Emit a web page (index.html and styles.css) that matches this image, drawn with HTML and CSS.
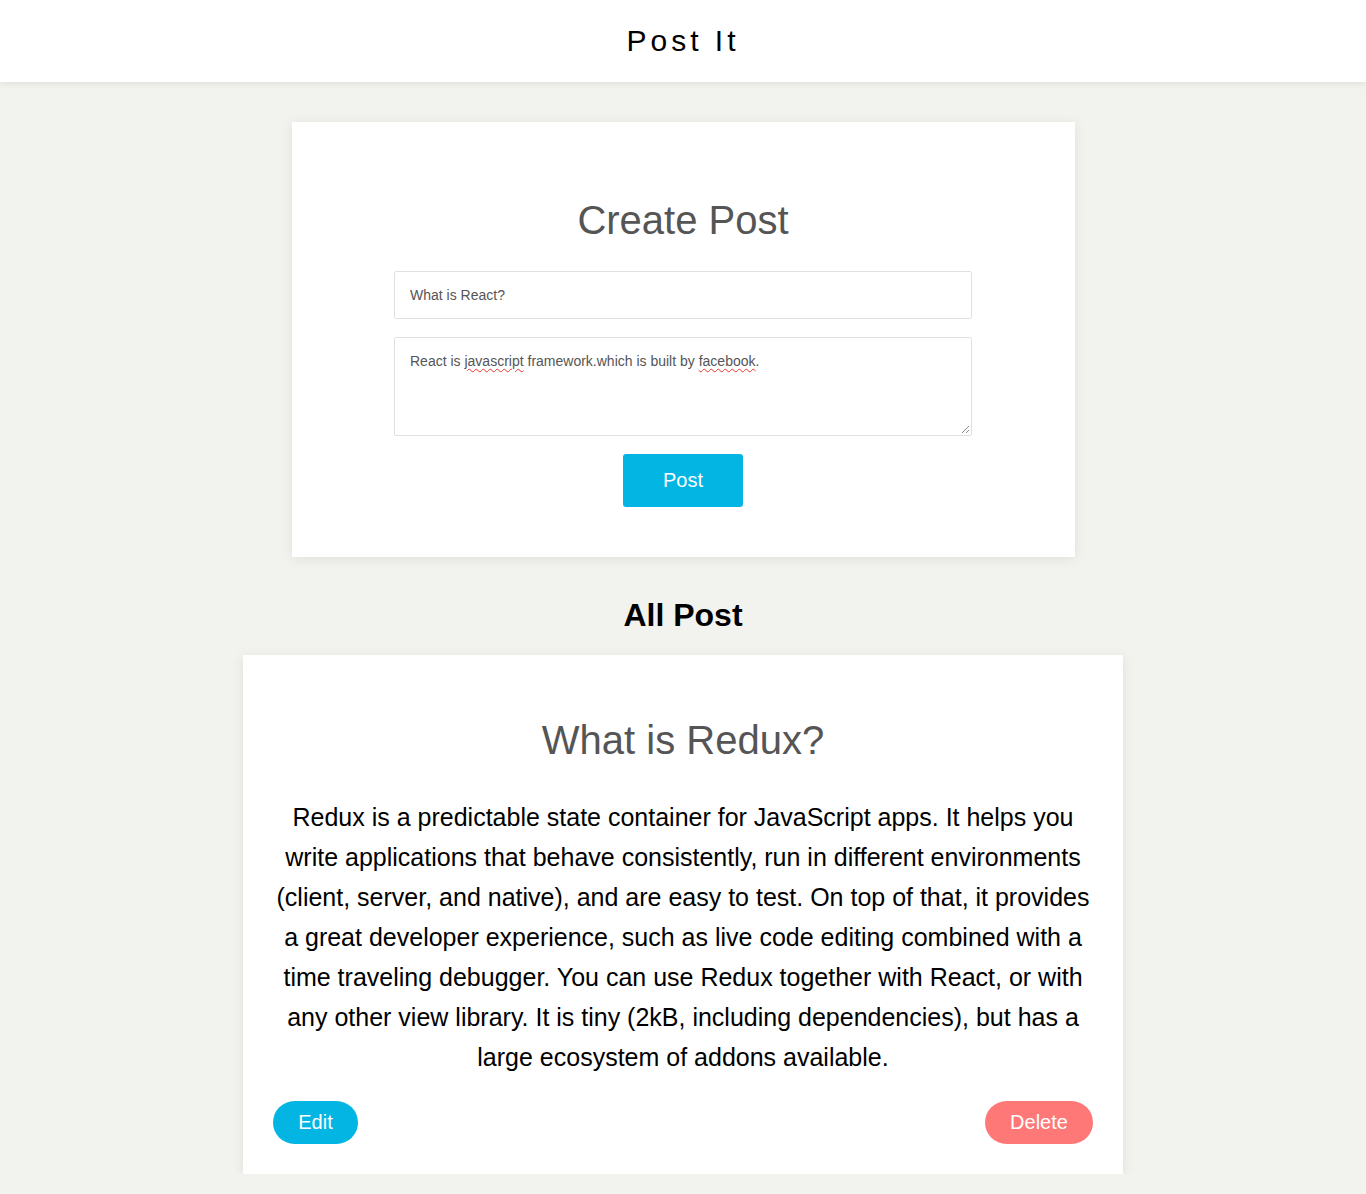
FILE: index.html
```html
<!DOCTYPE html>
<html lang="en">
<head>
<meta charset="utf-8">
<title>Post It</title>
<link rel="stylesheet" href="styles.css">
</head>
<body>
<header class="topbar">
  <h1 class="brand">Post It</h1>
</header>
<main class="main">
  <section class="card create">
    <h2 class="card-title">Create Post</h2>
    <form class="form">
      <input class="field" type="text" value="What is React?">
      <div class="field area">React is <span class="typo">javascript</span> framework.which is built by <span class="typo">facebook</span>.<svg class="grip" width="9" height="9" viewBox="0 0 9 9"><path d="M8 1L1 8M8 5L5 8" stroke="#8a8a8a" stroke-width="1"/></svg></div>
      <button class="btn-post" type="button">Post</button>
    </form>
  </section>
  <h2 class="section-title">All Post</h2>
  <article class="card post">
    <h2 class="card-title">What is Redux?</h2>
    <p class="post-body">Redux is a predictable state container for JavaScript apps. It helps you write applications that behave consistently, run in different environments (client, server, and native), and are easy to test. On top of that, it provides a great developer experience, such as live code editing combined with a time traveling debugger. You can use Redux together with React, or with any other view library. It is tiny (2kB, including dependencies), but has a large ecosystem of addons available.</p>
    <div class="actions">
      <button class="pill edit" type="button">Edit</button>
      <button class="pill delete" type="button">Delete</button>
    </div>
  </article>
</main>
</body>
</html>
```
FILE: styles.css
```css
* { box-sizing: border-box; }
html, body { margin: 0; padding: 0; }
body {
  background: #f2f2ee;
  font-family: "Liberation Sans", Arial, sans-serif;
  color: #000;
}
.topbar {
  background: #fff;
  height: 82px;
  display: flex;
  align-items: center;
  justify-content: center;
  box-shadow: 0 2px 6px rgba(0, 0, 0, 0.08);
  position: relative;
}
.brand {
  margin: 0;
  font-size: 30px;
  font-weight: normal;
  letter-spacing: 4px;
}
.main {
  display: flex;
  flex-direction: column;
  align-items: center;
  padding-top: 40px;
}
.card {
  background: #fff;
  box-shadow: 0 2px 12px rgba(0, 0, 0, 0.08);
  display: flex;
  flex-direction: column;
  align-items: center;
}
.create {
  width: 783px;
  padding: 75px 0 50px;
}
.card-title {
  margin: 0;
  font-size: 40px;
  line-height: 46px;
  font-weight: normal;
  color: #555;
}
.form {
  width: 578px;
  margin-top: 28px;
  display: flex;
  flex-direction: column;
  align-items: center;
  gap: 18px;
}
.field {
  width: 100%;
  height: 48px;
  border: 1px solid #dde1e6;
  border-radius: 2px;
  padding: 0 15px;
  font-family: "Liberation Sans", Arial, sans-serif;
  font-size: 14px;
  color: #555;
  background: #fff;
  outline: none;
}
.area {
  height: 99px;
  padding: 15px 15px;
  line-height: 17px;
  position: relative;
}
.typo {
  text-decoration: underline wavy #e33;
  text-decoration-thickness: 1px;
  text-underline-offset: 2px;
}
.grip {
  position: absolute;
  right: 1px;
  bottom: 1px;
}
.btn-post {
  width: 120px;
  height: 53px;
  border: none;
  border-radius: 3px;
  background: #03b5e3;
  color: #fff;
  font-family: "Liberation Sans", Arial, sans-serif;
  font-size: 20px;
  cursor: pointer;
}
.section-title {
  margin: 40px 0 22px;
  font-size: 32px;
  line-height: 36px;
  font-weight: bold;
}
.post {
  width: 880px;
  padding: 62px 30px 30px;
}
.post-body {
  margin: 34px 0 0;
  font-size: 25px;
  line-height: 40px;
  text-align: center;
}
.actions {
  align-self: stretch;
  display: flex;
  justify-content: space-between;
  margin-top: 24px;
}
.pill {
  height: 43px;
  border: none;
  border-radius: 22px;
  color: #fff;
  font-family: "Liberation Sans", Arial, sans-serif;
  font-size: 20px;
  cursor: pointer;
}
.edit { width: 85px; background: #03b5e3; }
.delete { width: 108px; background: #ff7878; }
```
